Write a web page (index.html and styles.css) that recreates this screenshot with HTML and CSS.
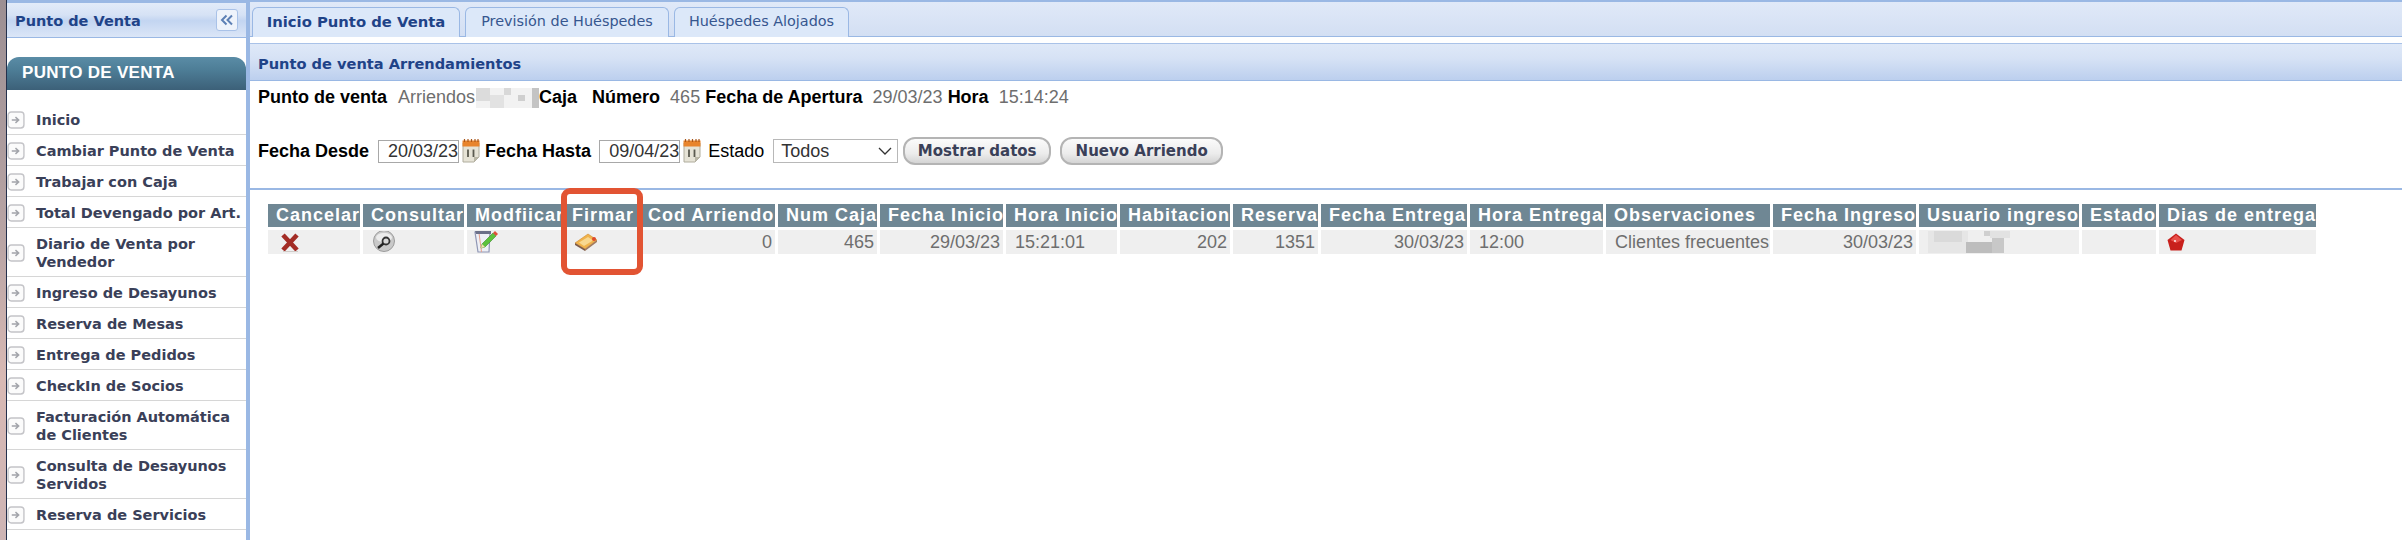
FILE: index.html
```html
<!DOCTYPE html>
<html lang="es">
<head>
    <meta charset="UTF-8">
    <title>Punto de Venta</title>
    <link rel="stylesheet" href="styles.css">
</head>
<body>
    <svg width="0" height="0" class="defs">
        <defs>
            <symbol id="arrow" viewBox="0 0 17 17">
                <rect x="1" y="1" width="15" height="15" rx="3" fill="#fbfbfb" stroke="#c4c4c8" stroke-width="1.3"/>
                <path d="M4.5 8.5h6M8 5.8l3 2.7-3 2.7" fill="none" stroke="#a2a4aa" stroke-width="1.4"/>
            </symbol>
            <symbol id="calendar" viewBox="0 0 18 24">
                <path d="M1 4h16v14l-5 5H1z" fill="#e6e3d6" stroke="#b0ad9e"/>
                <path d="M12 23v-5h5z" fill="#b9b6a6"/>
                <rect x="0.5" y="1.5" width="17" height="6" fill="#e8842c"/>
                <path d="M2.5 0v3M6 0v3M9.5 0v3M13 0v3M16 0v3" stroke="#a9561a" stroke-width="1.2"/>
                <path d="M6 10.5v7.5M11.500 10.500v7.500" stroke="#5b5a50" stroke-width="1.800"/>
            </symbol>
        </defs>
    </svg>

    <div class="app">
        <div class="desktop-edge"></div>

        <aside class="sidebar">
            <div class="sidebar-head">
                <span>Punto de Venta</span>
                <button class="collapse" type="button">
                    <svg width="14" height="12" viewBox="0 0 14 12"><path d="M6.500 1.500 2 6l4.500 4.500M12 1.500 7.500 6l4.500 4.500" fill="none" stroke="#5d80b5" stroke-width="2"/></svg>
                </button>
            </div>
            <h2 class="menu-title">PUNTO DE VENTA</h2>
            <ul class="menu">
                <li><svg class="menu-icon"><use href="#arrow"/></svg><a>Inicio</a></li>
                <li><svg class="menu-icon"><use href="#arrow"/></svg><a>Cambiar Punto de Venta</a></li>
                <li><svg class="menu-icon"><use href="#arrow"/></svg><a>Trabajar con Caja</a></li>
                <li><svg class="menu-icon"><use href="#arrow"/></svg><a>Total Devengado por Art.</a></li>
                <li><svg class="menu-icon"><use href="#arrow"/></svg><a>Diario de Venta por Vendedor</a></li>
                <li><svg class="menu-icon"><use href="#arrow"/></svg><a>Ingreso de Desayunos</a></li>
                <li><svg class="menu-icon"><use href="#arrow"/></svg><a>Reserva de Mesas</a></li>
                <li><svg class="menu-icon"><use href="#arrow"/></svg><a>Entrega de Pedidos</a></li>
                <li><svg class="menu-icon"><use href="#arrow"/></svg><a>CheckIn de Socios</a></li>
                <li><svg class="menu-icon"><use href="#arrow"/></svg><a>Facturación Automática de Clientes</a></li>
                <li><svg class="menu-icon"><use href="#arrow"/></svg><a>Consulta de Desayunos Servidos</a></li>
                <li><svg class="menu-icon"><use href="#arrow"/></svg><a>Reserva de Servicios</a></li>
            </ul>
        </aside>

        <main class="main">
            <nav class="tabs">
                <a class="tab tab-active">Inicio Punto de Venta</a>
                <a class="tab tab-second">Previsión de Huéspedes</a>
                <a class="tab tab-third">Huéspedes Alojados</a>
            </nav>

            <section class="panel">
                <h1 class="panel-title">Punto de venta Arrendamientos</h1>

                <div class="filters">
                    <div class="info-row">
                        <b>Punto de venta</b>
                        <span class="val val-name">Arriendos</span>
                        <svg class="blur-name" width="63" height="20" viewBox="0 0 63 20">
                            <rect width="63" height="20" fill="#f2f2f2"/>
                            <rect x="0" y="0" width="14" height="13" fill="#dcdcdc"/>
                            <rect x="14" y="7" width="14" height="13" fill="#e2e2e2"/>
                            <rect x="28" y="0" width="7" height="7" fill="#d8d8d8"/>
                            <rect x="42" y="7" width="7" height="6" fill="#cfcfcf"/>
                            <rect x="56" y="0" width="7" height="20" fill="#c4c4c4"/>
                        </svg>
                        <b>Caja</b>
                        <b class="lbl-num">Número</b>
                        <span class="val val-num">465</span>
                        <b class="lbl-open">Fecha de Apertura</b>
                        <span class="val val-open">29/03/23</span>
                        <b class="lbl-hour">Hora</b>
                        <span class="val val-hour">15:14:24</span>
                    </div>

                    <form class="search-row">
                        <b>Fecha Desde</b>
                        <input class="date date-from" type="text" value="20/03/23">
                        <svg class="cal"><use href="#calendar"/></svg>
                        <b class="lbl-to">Fecha Hasta</b>
                        <input class="date date-to" type="text" value="09/04/23">
                        <svg class="cal"><use href="#calendar"/></svg>
                        <span class="lbl-state">Estado</span>
                        <span class="select-wrap">
                            <select class="state"><option>Todos</option></select>
                            <svg class="chevron" width="14" height="8" viewBox="0 0 14 8"><path d="M1 1l6 6 6-6" fill="none" stroke="#333" stroke-width="1.300"/></svg>
                        </span>
                        <button class="btn btn-show" type="button">Mostrar datos</button>
                        <button class="btn btn-new" type="button">Nuevo Arriendo</button>
                    </form>
                </div>

                <div class="grid-wrap">
                    <table class="grid">
                        <colgroup>
                            <col class="c92"><col class="c101"><col class="c94"><col class="c73"><col class="c135"><col class="c99"><col class="c123"><col class="c111"><col class="c110"><col class="c85"><col class="c146"><col class="c133"><col class="c164"><col class="c143"><col class="c160"><col class="c74"><col class="c157">
                        </colgroup>
                        <thead>
                            <tr>
                                <th>Cancelar</th><th>Consultar</th><th>Modfiicar</th><th>Firmar</th><th>Cod Arriendo</th><th>Num Caja</th><th>Fecha Inicio</th><th>Hora Inicio</th><th>Habitacion</th><th>Reserva</th><th>Fecha Entrega</th><th>Hora Entrega</th><th>Observaciones</th><th>Fecha Ingreso</th><th>Usuario ingreso</th><th>Estado</th><th>Dias de entrega</th>
                            </tr>
                        </thead>
                        <tbody>
                            <tr>
                                <td class="ic">
                                    <svg width="20" height="21" viewBox="0 0 20 21"><path d="M3 3l14 15M17 3 3 18" fill="none" stroke="#a32c25" stroke-width="4.600"/><path d="M3 19.500h15" stroke="#d0cbc8" stroke-width="1"/></svg>
                                </td>
                                <td class="ic ic-look">
                                    <svg width="24" height="22" viewBox="0 0 24 22"><circle cx="12" cy="10" r="10.500" fill="#c9c9c9" stroke="#9b9b9b"/><ellipse cx="12" cy="6.500" rx="8" ry="4.500" fill="#ececec"/><circle cx="14" cy="10" r="3.500" fill="#d8d8d8" stroke="#333" stroke-width="1.800"/><path d="M11.500 12.500 6 17" stroke="#222" stroke-width="2.400"/></svg>
                                </td>
                                <td class="ic ic-edit">
                                    <svg width="24" height="24" viewBox="0 0 24 24"><path d="M1 2h15l-1 20H4z" fill="#eef0f6" stroke="#8f96b4" stroke-width="1.200"/><path d="M5 3l2.500 19" stroke="#e6a08c"/><path d="M1 1h16v3H2z" fill="#6b7088"/><path d="M7 18l1-4L19 3l3 3L11 17z" fill="#5cc23c" stroke="#3d8a2a" stroke-width=".6"/><path d="M19 3l2-2 3 3-2 2z" fill="#e0503a"/><path d="M7 18l1-4 3 3z" fill="#f4e0b0"/></svg>
                                </td>
                                <td class="ic ic-sign">
                                    <svg width="24" height="18" viewBox="0 0 24 18"><path d="M1 10 14 1l9 6-12 9z" fill="#f0b34c" stroke="#d08a2a" stroke-width=".600"/><path d="M1 10l10 6v2L1 12z" fill="#7c5a48"/><path d="M11 16l12-9v2L11 18z" fill="#a07a5e"/><path d="M5 9.500 14 4l5 3.500-9 5.500z" fill="#f8d890"/><circle cx="20" cy="6" r="2" fill="#dd4a2c"/></svg>
                                </td>
                                <td class="num">0</td>
                                <td class="num">465</td>
                                <td class="num">29/03/23</td>
                                <td class="txt">15:21:01</td>
                                <td class="num">202</td>
                                <td class="num">1351</td>
                                <td class="num">30/03/23</td>
                                <td class="txt">12:00</td>
                                <td class="txt">Clientes frecuentes</td>
                                <td class="num">30/03/23</td>
                                <td class="txt">
                                    <svg class="blur-user" width="82" height="22" viewBox="0 0 82 22">
                                        <rect x="0" y="0" width="40" height="22" fill="#e6e6e6"/>
                                        <rect x="6" y="0" width="28" height="11" fill="#dadada"/>
                                        <rect x="38" y="11" width="26" height="11" fill="#bdbdbd"/>
                                        <rect x="56" y="0" width="6" height="5" fill="#cfcfcf"/>
                                        <rect x="62" y="0" width="20" height="7" fill="#e2e2e2"/>
                                        <rect x="64" y="7" width="12" height="15" fill="#c8c8c8"/>
                                    </svg>
                                </td>
                                <td></td>
                                <td class="ic ic-days">
                                    <svg width="18" height="18" viewBox="0 0 18 18"><path d="M9 .5 17.500 7l-3 10.500h-11L.5 7z" fill="#c8201c"/><path d="M9 2 15 7 9 10 3.500 7z" fill="#e8504a"/><circle cx="8" cy="8" r=".9" fill="#fff"/></svg>
                                </td>
                            </tr>
                        </tbody>
                    </table>
                    <div class="highlight"></div>
                </div>
            </section>
        </main>
    </div>
</body>
</html>
```

FILE: styles.css
```css
* {
    box-sizing: border-box;
}
html, body {
    margin: 0;
    height: 540px;
    overflow: hidden;
    background-color: white;
    font-family: "Liberation Sans", Arial, sans-serif;
}
.defs {
    position: absolute;
}
.app {
    display: flex;
    height: 540px;
}
.desktop-edge {
    flex: 0 0 7px;
    background: linear-gradient(180deg, #9c8f93 0%, #b9a5a5 45%, #d8b9b4 70%, #cdb4b4 100%);
    border-right: 1px solid #24304c;
}

/* left column */
.sidebar {
    flex: 0 0 243px;
    border-right: 4px solid #9ab8e4;
    border-top: 3px solid #9ab8e4;
}
.sidebar-head {
    height: 35px;
    display: flex;
    align-items: center;
    justify-content: space-between;
    padding: 1px 8px 0 8px;
    color: #1f4388;
    font-family: "DejaVu Sans", sans-serif;
    font-size: 14.500px;
    font-weight: bold;
    background: linear-gradient(180deg, #e2ebf9 0%, #d6e2f5 35%, #c3d5f1 52%, #dbe6f7 100%);
    border-bottom: 1px solid #9ab8e4;
}
.collapse {
    width: 22px;
    height: 22px;
    margin-top: -2px;
    padding: 0;
    display: flex;
    align-items: center;
    justify-content: center;
    background-color: #eef3fb;
    border: 1px solid #a9c2e8;
    border-radius: 3px;
}
.menu-title {
    height: 33px;
    margin: 19px 0 14px 0;
    padding-left: 15px;
    line-height: 31px;
    color: white;
    font-size: 17px;
    font-weight: bold;
    letter-spacing: .3px;
    border-radius: 12px 12px 0 0;
    background: linear-gradient(180deg, #5a8ca6 0%, #4d7d96 40%, #3c6078 100%);
}
.menu {
    list-style: none;
    margin: 0;
    padding: 0;
}
.menu li {
    display: flex;
    align-items: center;
    gap: 11px;
    padding: 7px 0 5px 0;
    border-bottom: 1px solid #d6d6d6;
    color: #3a4058;
    font-family: "DejaVu Sans", sans-serif;
    font-size: 14.500px;
    font-weight: bold;
    line-height: 18px;
}
.menu-icon {
    flex: 0 0 18px;
    width: 18px;
    height: 18px;
    margin-left: 0;
}

/* tabs and panel */
.main {
    flex: 1;
    min-width: 0;
}
.tabs {
    height: 37px;
    display: flex;
    gap: 5px;
    padding: 5px 0 0 2px;
    border-top: 2px solid #9ab8e4;
    border-bottom: 1px solid #9ab8e4;
    background: linear-gradient(180deg, #e0e9f8 0%, #d3dff3 100%);
}
.tab {
    height: 30px;
    line-height: 27px;
    text-align: center;
    color: #36568f;
    font-family: "DejaVu Sans", sans-serif;
    font-size: 14.400px;
    border: 1px solid #9ab8e4;
    border-bottom: none;
    border-radius: 6px 6px 0 0;
    background-color: #dce8f9;
}
.tab-active {
    width: 208px;
    color: #1f4388;
    font-size: 14.800px;
    font-weight: bold;
}
.tab-second {
    width: 204px;
}
.tab-third {
    width: 175px;
}
.panel {
    margin-top: 6px;
    border-top: 1px solid #a9c2e8;
}
.panel-title {
    height: 37px;
    margin: 0;
    padding-left: 8px;
    line-height: 39px;
    color: #1f4388;
    font-family: "DejaVu Sans", sans-serif;
    font-size: 14.600px;
    font-weight: bold;
    background: linear-gradient(180deg, #dfe9f8 0%, #d6e2f5 40%, #bccfee 100%);
    border-bottom: 1px solid #9ab8e4;
}
.filters {
    height: 109px;
    padding: 6px 0 0 8px;
    border-bottom: 2px solid #9ab8e4;
    font-size: 18px;
    color: black;
}
.info-row {
    display: flex;
    align-items: center;
    height: 21px;
}
.val {
    color: #6e6e6e;
}
.val-name {
    margin-left: 11px;
}
.blur-name {
    margin-left: 1px;
}
.lbl-num {
    margin-left: 15px;
}
.val-num {
    margin-left: 10px;
}
.lbl-open {
    margin-left: 5px;
}
.val-open {
    margin-left: 10px;
}
.lbl-hour {
    margin-left: 5px;
}
.val-hour {
    margin-left: 10px;
}
.search-row {
    display: flex;
    align-items: center;
    height: 28px;
    margin-top: 29px;
}
.date {
    width: 81px;
    height: 23px;
    padding: 0 0 0 9px;
    font-family: "Liberation Sans", Arial, sans-serif;
    font-size: 18px;
    color: #333;
    border: 1px solid #a8a8a8;
    border-radius: 0;
}
.date-from {
    margin-left: 9px;
}
.date-to {
    margin-left: 8px;
}
.cal {
    width: 18px;
    height: 24px;
    margin-left: 3px;
}
.lbl-to {
    margin-left: 5px;
}
.lbl-state {
    margin-left: 7px;
}
.select-wrap {
    position: relative;
    display: block;
    margin-left: 9px;
}
.state {
    display: block;
    width: 125px;
    height: 24px;
    padding: 0 0 0 7px;
    appearance: none;
    background: white;
    font-family: "Liberation Sans", Arial, sans-serif;
    font-size: 18px;
    color: #333;
    border: 1px solid #b8b8b8;
    border-radius: 0;
}
.chevron {
    position: absolute;
    right: 6px;
    top: 8px;
}
.btn {
    height: 28px;
    padding: 0;
    margin-left: 5px;
    color: #3a4058;
    font-family: "DejaVu Sans", sans-serif;
    font-size: 15px;
    font-weight: bold;
    border: 2px solid #b4b4b4;
    border-radius: 12px;
    background: linear-gradient(180deg, #fbfbfb 0%, #ececec 60%, #d4d4d4 100%);
}
.btn-show {
    width: 148px;
}
.btn-new {
    width: 163px;
    margin-left: 9px;
}

/* data grid */
.grid-wrap {
    position: relative;
    padding: 11px 0 0 15px;
}
.grid {
    table-layout: fixed;
    width: 2053px;
    border-collapse: separate;
    border-spacing: 3px;
}
.c92 { width: 92px; }
.c101 { width: 101px; }
.c94 { width: 94px; }
.c73 { width: 73px; }
.c135 { width: 135px; }
.c99 { width: 99px; }
.c123 { width: 123px; }
.c111 { width: 111px; }
.c110 { width: 110px; }
.c85 { width: 85px; }
.c146 { width: 146px; }
.c133 { width: 133px; }
.c164 { width: 164px; }
.c143 { width: 143px; }
.c160 { width: 160px; }
.c74 { width: 74px; }
.c157 { width: 157px; }
.grid th {
    height: 23px;
    padding: 0 0 0 8px;
    overflow: hidden;
    white-space: nowrap;
    text-align: left;
    color: white;
    font-size: 18px;
    font-weight: bold;
    letter-spacing: 1px;
    line-height: 23px;
    background-color: #6f8794;
}
.grid td {
    height: 24px;
    padding: 0;
    overflow: hidden;
    white-space: nowrap;
    color: #6e6e6e;
    font-size: 18px;
    line-height: 24px;
    background-color: #efefef;
}
.grid td.num {
    padding-right: 3px;
    text-align: right;
}
.grid td.txt {
    padding-left: 9px;
}
.grid td svg {
    display: block;
}
.grid td.ic {
    padding-left: 12px;
}
.grid td.ic-look {
    padding-left: 9px;
}
.grid td.ic-edit {
    padding-left: 7px;
}
.grid td.ic-sign {
    padding-left: 10px;
}
.grid td.ic-days {
    padding-left: 8px;
}
.highlight {
    position: absolute;
    left: 311px;
    top: -2px;
    width: 82px;
    height: 87px;
    border: 6px solid #e25433;
    border-radius: 9px;
}
```
